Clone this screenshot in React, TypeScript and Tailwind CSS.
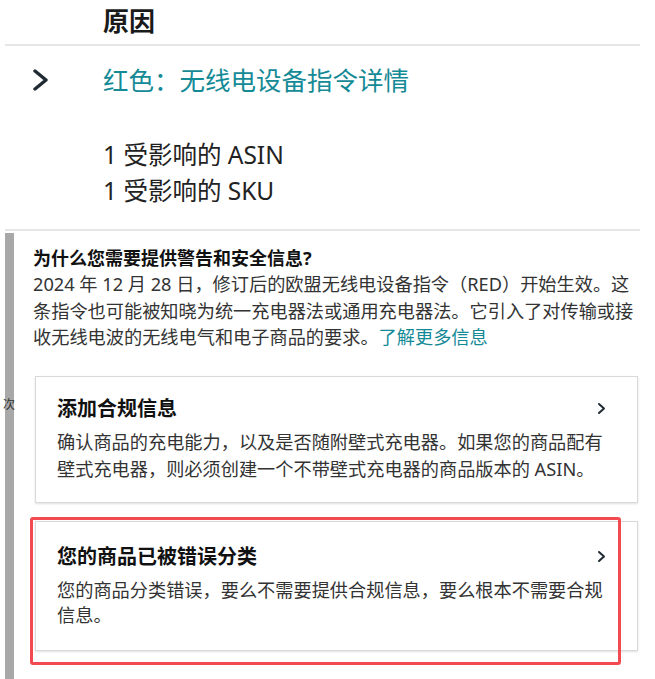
import React from "react";

function BigChevron() {
  return (
    <svg width="18" height="22" viewBox="0 0 18 22" fill="none">
      <path d="M3 2 L14 11 L3 20" stroke="#1f2a33" strokeWidth="3.4" strokeLinecap="round" strokeLinejoin="round" />
    </svg>
  );
}

function SmallChevron() {
  return (
    <svg width="9" height="13" viewBox="0 0 9 13" fill="none">
      <path d="M2 2 L7 6.5 L2 11" stroke="#1f2a33" strokeWidth="2" strokeLinecap="round" strokeLinejoin="round" />
    </svg>
  );
}

export default function App() {
  return (
    <div className="relative w-[655px] h-[679px] overflow-hidden bg-white font-['Noto_Sans','Noto_Sans_CJK_SC',sans-serif] text-[#0f1111]">
      {/* Top block */}
      <div className="h-[44px] pl-[103px] pt-[6px]">
        <div className="text-[26px] leading-[30px] font-bold text-[#1a1a1a]">原因</div>
      </div>
      <div className="ml-[5px] w-[635px] h-[2px] bg-[#e6e6e6]" />
      <div className="mt-[17px] flex h-[34px] items-center">
        <div className="w-[103px] pl-[32px] flex items-center">
          <BigChevron />
        </div>
        <div className="text-[25.5px] leading-[34px] text-[#148a96]">红色：无线电设备指令详情</div>
      </div>
      <div className="mt-[40px] pl-[103px] text-[24.5px] leading-[36px] text-[#222]">
        <div>1 受影响的 ASIN</div>
        <div>1 受影响的 SKU</div>
      </div>
      <div className="mt-[20px] ml-[5px] w-[635px] h-[2px] bg-[#e6e6e6]" />

      {/* Lower section with left bar */}
      <div className="mt-[2px] flex h-[460px]">
        <div className="ml-[5px] w-[9px] shrink-0 bg-[#a8a8a8]" />
        <div className="pl-[19px] w-[624px]">
          <div className="pt-[12px] text-[18px] leading-[26px] font-bold text-[#111]">
            为什么您需要提供警告和安全信息?
          </div>
          <div className="text-[18.2px] leading-[26.5px] text-[#333] whitespace-nowrap">
            2024 年 12 月 28 日，修订后的欧盟无线电设备指令（RED）开始生效。这
            <br />
            条指令也可能被知晓为统一充电器法或通用充电器法。它引入了对传输或接
            <br />
            收无线电波的无线电气和电子商品的要求。
            <span className="text-[#148a96]">了解更多信息</span>
          </div>

          {/* Card 1 */}
          <div className="mt-[25px] ml-[2px] w-[603px] border border-[#d9d9d9] bg-white shadow-[0_1px_2px_rgba(0,0,0,0.12)] pl-[21px] pr-[31px] pt-[19px] pb-[19px]">
            <div className="flex items-center justify-between">
              <div className="text-[20px] leading-[26px] font-bold text-[#111]">添加合规信息</div>
              <SmallChevron />
            </div>
            <div className="mt-[7px] text-[18.2px] leading-[27px] text-[#333] whitespace-nowrap">
              确认商品的充电能力，以及是否随附壁式充电器。如果您的商品配有
              <br />
              壁式充电器，则必须创建一个不带壁式充电器的商品版本的 ASIN。
            </div>
          </div>

          {/* Card 2 */}
          <div className="mt-[18px] ml-[2px] w-[603px] border border-[#d9d9d9] bg-white shadow-[0_1px_2px_rgba(0,0,0,0.12)] pl-[21px] pr-[31px] pt-[22px] pb-[21px]">
            <div className="flex items-center justify-between">
              <div className="text-[20px] leading-[26px] font-bold text-[#111]">您的商品已被错误分类</div>
              <SmallChevron />
            </div>
            <div className="mt-[8px] text-[18.2px] leading-[25.5px] text-[#333] whitespace-nowrap">
              您的商品分类错误，要么不需要提供合规信息，要么根本不需要合规
              <br />
              信息。
            </div>
          </div>
        </div>
      </div>

      {/* small glyph fragment on the left bar */}
      <span className="absolute left-[3px] top-[397px] text-[12px] leading-[16px] text-[#333]">次</span>

      {/* red annotation box */}
      <div className="absolute left-[30px] top-[517px] w-[591px] h-[148px] border-[3px] border-[#f24a50] rounded-[3px]" />
    </div>
  );
}
